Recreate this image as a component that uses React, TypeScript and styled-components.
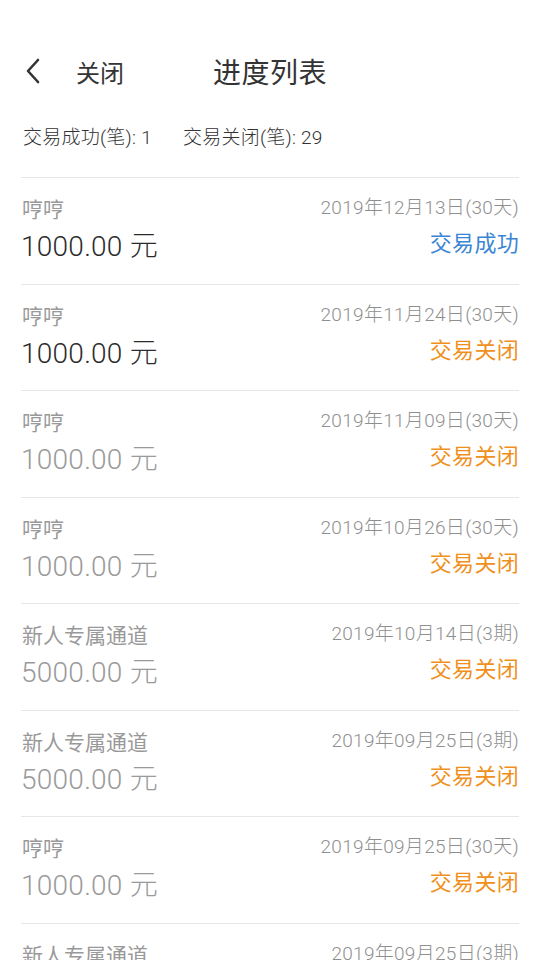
import React from "react";
import styled, { createGlobalStyle } from "styled-components";

const GlobalStyle = createGlobalStyle`
  html, body {
    margin: 0;
    padding: 0;
    background: #ffffff;
  }
  body {
    font-family: Roboto, "Noto Sans CJK SC", sans-serif;
  }
`;

const Page = styled.div`
  width: 540px;
  height: 960px;
  overflow: hidden;
  background: #ffffff;
`;

const Header = styled.div`
  position: relative;
  display: flex;
  align-items: center;
  justify-content: center;
  height: 48px;
  margin-top: 47px;
`;

const BackButton = styled.div`
  position: absolute;
  left: 24px;
  top: 0;
  height: 48px;
  display: flex;
  align-items: center;
  gap: 34px;
  font-size: 24px;
  color: #333333;
`;

const Title = styled.h1`
  margin: 0;
  font-size: 28px;
  font-weight: 400;
  color: #333333;
  letter-spacing: 0.5px;
`;

const Summary = styled.div`
  display: flex;
  gap: 31px;
  padding: 30px 0 26px 23px;
  font-size: 19px;
  font-weight: 300;
  line-height: 26px;
  letter-spacing: 0.25px;
  color: #333333;
`;

const List = styled.div`
  margin: 0 21px;
`;

const Row = styled.div`
  box-sizing: border-box;
  display: flex;
  justify-content: space-between;
  border-top: 1px solid #e6e6e6;
  height: 106.5px;
`;

const Left = styled.div`
  display: flex;
  flex-direction: column;
  padding-top: 19px;
`;

const Name = styled.div`
  font-size: 21px;
  line-height: 26px;
  color: #999999;
  padding-left: 1px;
`;

const Amount = styled.div<{ $active: boolean }>`
  margin-top: 6px;
  font-size: 28px;
  font-weight: 300;
  line-height: 36px;
  letter-spacing: 0.25px;
  color: ${(p) => (p.$active ? "#2b2b2b" : "#9a9a9a")};
`;

const Right = styled.div`
  display: flex;
  flex-direction: column;
  align-items: flex-end;
  padding-top: 17px;
`;

const DateText = styled.div`
  font-size: 19px;
  font-weight: 300;
  line-height: 26px;
  letter-spacing: 0.3px;
  color: #8f8f8f;
`;

const Status = styled.div<{ $success: boolean }>`
  margin-top: 8px;
  font-size: 22px;
  line-height: 30px;
  letter-spacing: 0.3px;
  color: ${(p) => (p.$success ? "#3b86d4" : "#f0901c")};
`;

const records = [
  { name: "哼哼", amount: "1000.00 元", date: "2019年12月13日(30天)", success: true, active: true },
  { name: "哼哼", amount: "1000.00 元", date: "2019年11月24日(30天)", success: false, active: true },
  { name: "哼哼", amount: "1000.00 元", date: "2019年11月09日(30天)", success: false, active: false },
  { name: "哼哼", amount: "1000.00 元", date: "2019年10月26日(30天)", success: false, active: false },
  { name: "新人专属通道", amount: "5000.00 元", date: "2019年10月14日(3期)", success: false, active: false },
  { name: "新人专属通道", amount: "5000.00 元", date: "2019年09月25日(3期)", success: false, active: false },
  { name: "哼哼", amount: "1000.00 元", date: "2019年09月25日(30天)", success: false, active: false },
  { name: "新人专属通道", amount: "5000.00 元", date: "2019年09月25日(3期)", success: false, active: false },
];

const ChevronLeft = () => (
  <svg width="18" height="26" viewBox="0 0 18 26" fill="none">
    <path d="M14 2 L4 13 L14 24" stroke="#333333" strokeWidth="2.6" strokeLinecap="round" strokeLinejoin="round" />
  </svg>
);

const App: React.FunctionComponent = () => (
  <Page>
    <GlobalStyle />
    <Header>
      <BackButton>
        <ChevronLeft />
        <span>关闭</span>
      </BackButton>
      <Title>进度列表</Title>
    </Header>
    <Summary>
      <span>交易成功(笔): 1</span>
      <span>交易关闭(笔): 29</span>
    </Summary>
    <List>
      {records.map((r, i) => (
        <Row key={i}>
          <Left>
            <Name>{r.name}</Name>
            <Amount $active={r.active}>{r.amount}</Amount>
          </Left>
          <Right>
            <DateText>{r.date}</DateText>
            <Status $success={r.success}>{r.success ? "交易成功" : "交易关闭"}</Status>
          </Right>
        </Row>
      ))}
    </List>
  </Page>
);

export default App;
